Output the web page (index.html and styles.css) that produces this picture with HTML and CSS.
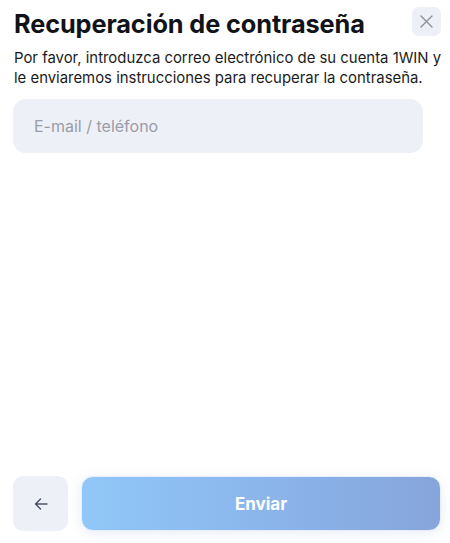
FILE: index.html
```html
<!DOCTYPE html>
<html lang="es">
<head>
    <meta charset="UTF-8" />
    <title>Recuperación de contraseña</title>
    <link rel="stylesheet" href="styles.css">
</head>
<body>

<div class="sheet">
    <!-- Шапка -->
    <div class="sheet-head">
        <h1 class="sheet-title">Recuperación de contraseña</h1>
        <button class="close-btn" type="button">
            <svg width="13" height="13" viewBox="0 0 13 13"><path d="M1 1L12 12M12 1L1 12" stroke="#8c909c" stroke-width="1.4" stroke-linecap="round"/></svg>
        </button>
    </div>

    <p class="sheet-text">Por favor, introduzca correo electrónico de su cuenta 1WIN y<br>le enviaremos instrucciones para recuperar la contraseña.</p>

    <input class="field" type="text" placeholder="E-mail / teléfono">

    <div class="spacer"></div>

    <!-- Нижние кнопки -->
    <div class="sheet-foot">
        <button class="back-btn" type="button">
            <svg width="14" height="12" viewBox="0 0 14 12"><path d="M13 6H1.5M6.5 1L1.5 6L6.5 11" stroke="#4b5068" stroke-width="1.4" fill="none" stroke-linecap="round" stroke-linejoin="round"/></svg>
        </button>
        <button class="send-btn" type="button">Enviar</button>
    </div>
</div>

</body>
</html>
```

FILE: styles.css
```css
body {
    margin: 0;
    padding: 0;
    font-family: Inter, "Noto Sans", sans-serif;
    background: #fff;
    color: #111318;
}

.sheet {
    height: 543px;
    box-sizing: border-box;
    padding: 7px 9px 12px 13px;
    display: flex;
    flex-direction: column;
}

.sheet-head {
    display: flex;
    justify-content: space-between;
    align-items: flex-start;
}

.sheet-title {
    margin: 2px 0 0 1px;
    font-size: 25.3px;
    font-weight: 700;
    line-height: 30px;
    letter-spacing: -0.1px;
}

.close-btn {
    width: 29px;
    height: 29px;
    border: none;
    border-radius: 7px;
    background: #eef0f7;
    display: flex;
    align-items: center;
    justify-content: center;
    padding: 0;
}

.sheet-text {
    margin: 9px -9px 0 1px;
    font-size: 14.9px;
    line-height: 20px;
    color: #1a1c22;
    white-space: nowrap;
}

.field {
    margin-top: 11px;
    width: 410px;
    height: 54px;
    box-sizing: border-box;
    border: none;
    border-radius: 13px;
    background: #eef0f8;
    padding: 0 21px;
    font-family: inherit;
    font-size: 16px;
    outline: none;
}
.field::placeholder {
    color: #9a9ca6;
}

.spacer {
    flex: 1;
}

.sheet-foot {
    display: flex;
    gap: 13px;
}

.back-btn {
    width: 55px;
    height: 55px;
    border: none;
    border-radius: 10px;
    background: #eef0f7;
    display: flex;
    align-items: center;
    justify-content: center;
    padding: 0;
}

.send-btn {
    flex: 1;
    height: 55px;
    border: 1px solid #e6effb;
    border-radius: 12px;
    background: linear-gradient(90deg, #91c7f8 0%, #8ab4ea 55%, #86a5db 100%);
    color: #fff;
    font-family: inherit;
    font-size: 17px;
    font-weight: 700;
    box-shadow: 0 2px 12px rgba(120, 150, 210, 0.18);
}
```
